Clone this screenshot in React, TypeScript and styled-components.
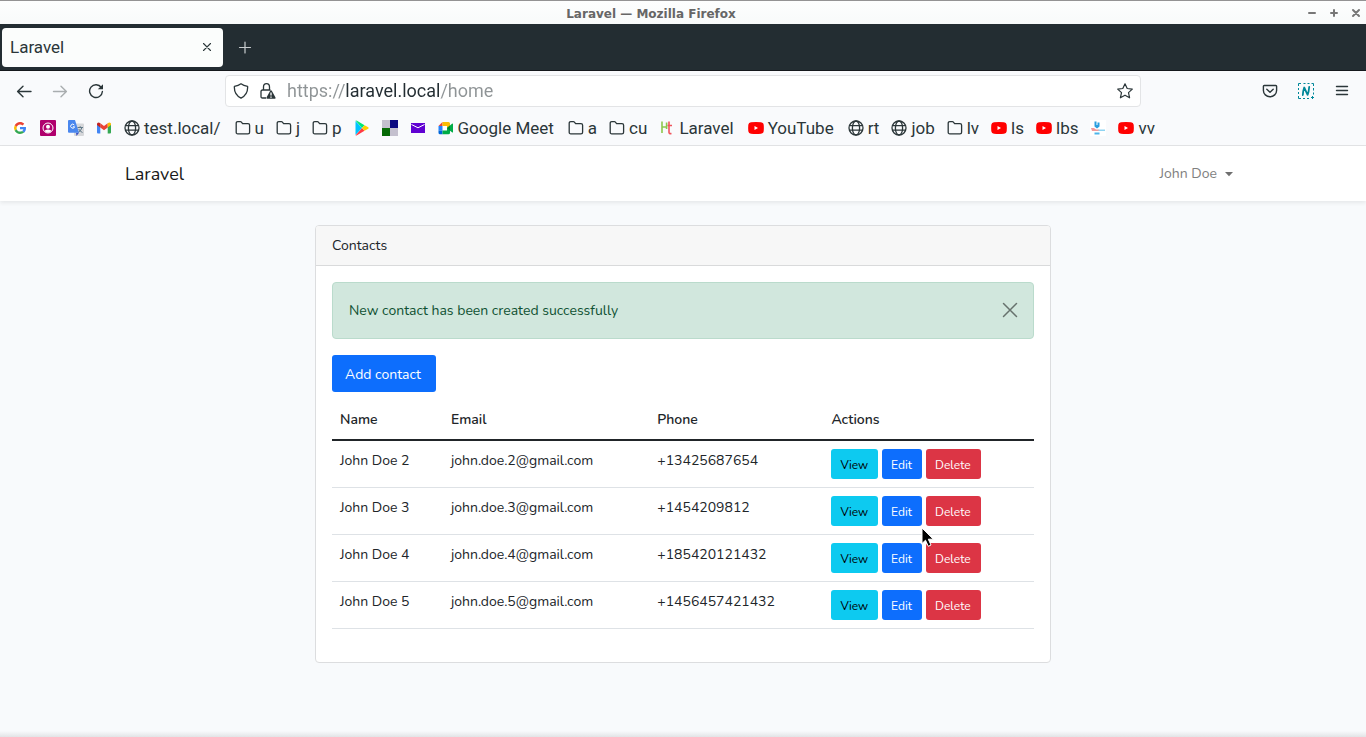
import React from "react";
import styled, { createGlobalStyle } from "styled-components";

const ui = `Roboto, "Liberation Sans", sans-serif`;
const web = `Nunito, "Open Sans", sans-serif`;

const GlobalStyle = createGlobalStyle`
  *, *::before, *::after { box-sizing: border-box; }
  body { margin: 0; background: #f8fafc; color: #212529; font-family: ${web}; font-size: 14px; line-height: 24px; }
  button, input { font-family: inherit; margin: 0; }
  svg { display: block; flex: none; }
`;

/* ---------- window ---------- */

const Window = styled.div`
  min-height: 100vh;
  display: flex;
  flex-direction: column;
`;

const TitleBar = styled.header`
  height: 24px;
  display: flex;
  align-items: center;
  padding-right: 4px;
  border-top: 1px solid #949394;
  background: linear-gradient(#fdfefe, #f8fafa);
`;

const WindowTitle = styled.div`
  flex: 1;
  padding: 2px 4px 0 0;
  text-align: center;
  color: #666;
  font: bold 12px/20px "DejaVu Sans", sans-serif;
`;

const WindowButtons = styled.div`
  display: flex;
  gap: 10px;
`;

const PlainButton = styled.button`
  display: flex;
  align-items: center;
  justify-content: center;
  padding: 0;
  border: 0;
  background: none;
  color: #2b3639;
`;

const TabStrip = styled.div`
  height: 47px;
  display: flex;
  align-items: center;
  gap: 14px;
  padding: 0 2px;
  background: #232d32;
  border-bottom: 1px solid #15181c;
`;

const Tab = styled.div`
  width: 221px;
  height: 39px;
  display: flex;
  align-items: center;
  justify-content: space-between;
  padding: 0 8px;
  border-radius: 4px;
  background: #fbfdfc;
  color: #2b3639;
  font: 17px/24px ${ui};
`;

const NavToolbar = styled.div`
  height: 40px;
  display: flex;
  align-items: center;
  justify-content: space-between;
  gap: 12px;
  padding: 0 16px;
  background: #f9fafc;
`;

const NavGroup = styled.div<{ $end?: boolean }>`
  display: flex;
  flex: 0 0 197px;
  gap: 20px;
  justify-content: ${(p) => (p.$end ? "flex-end" : "flex-start")};
`;

const AddressBar = styled.label`
  flex: 1;
  height: 32px;
  display: flex;
  align-items: center;
  gap: 11px;
  padding: 0 7px;
  border: 1px solid #e3e4e6;
  border-radius: 4px;
  background: #fff;
  color: #2b3639;
`;

const AddressInput = styled.input`
  flex: 1;
  min-width: 0;
  height: 28px;
  padding: 0 0 2px;
  border: 0;
  outline: 0;
  font: 18px/26px ${ui};
  background: linear-gradient(90deg, #8f9496 59px, #232d32 59px, #232d32 154px, #8f9496 154px);
  background-clip: text;
  -webkit-text-fill-color: transparent;
`;

const Bookmarks = styled.nav`
  height: 35px;
  display: flex;
  align-items: center;
  gap: 12px;
  padding: 0 12px;
  overflow: hidden;
  background: #f9fafc;
  border-bottom: 1px solid #e3e4e6;
`;

const Bookmark = styled.a<{ $long: boolean }>`
  display: flex;
  align-items: center;
  gap: 4px;
  padding-right: ${(p) => (p.$long ? 2 : 0)}px;
  color: #2b3639;
  font: 17px/24px ${ui};
  white-space: nowrap;
  text-decoration: none;
`;

/* ---------- page ---------- */

const Page = styled.div`
  position: relative;
  flex: 1;
  background: #f8fafc;
`;

const PageEdge = styled.div`
  position: absolute;
  left: 0;
  right: 0;
  bottom: 0;
  height: 6px;
  background: linear-gradient(#f8fafc, #e2e4e6);
`;

const Navbar = styled.nav`
  background: #fff;
  box-shadow: 0 2px 4px rgba(0, 0, 0, 0.075);
`;

const NavContainer = styled.div`
  max-width: 1140px;
  height: 55px;
  margin: 0 auto;
  padding: 0 20px 0 12px;
  display: flex;
  align-items: center;
  justify-content: space-between;
`;

const Brand = styled.a`
  color: #191919;
  font-size: 18px;
  line-height: 28px;
  text-decoration: none;
`;

const UserMenu = styled.button`
  display: flex;
  align-items: center;
  gap: 8px;
  padding: 1px 0 0;
  border: 0;
  background: none;
  color: #7f7f7f;
  font-size: 14px;
  line-height: 24px;
`;

const Main = styled.main`
  max-width: 760px;
  margin: 0 auto;
  padding: 24px 12px;
`;

const Card = styled.section`
  position: relative;
  border: 1px solid #dcdddf;
  border-radius: 4px;
  background: #fff;
`;

const CardHeader = styled.h1`
  margin: 0;
  padding: 8px 16px 7px;
  border-bottom: 1px solid #d9dadb;
  border-radius: 3px 3px 0 0;
  background: #f7f7f7;
  font-size: 14px;
  line-height: 24px;
  font-weight: 400;
`;

const CardBody = styled.div`
  padding: 16px 16px 33px;
`;

const Alert = styled.div`
  display: flex;
  align-items: flex-start;
  justify-content: space-between;
  padding: 16px 15px 15px 16px;
  margin-bottom: 16px;
  border: 1px solid #badbcc;
  border-radius: 4px;
  background: #d1e7dd;
  color: #0f5132;
`;

const AlertClose = styled(PlainButton)`
  height: 22px;
  color: #000;
  opacity: 0.5;
`;

const Button = styled.button<{ $bg: string; $dark?: boolean; $small?: boolean }>`
  height: ${(p) => (p.$small ? 30 : 37)}px;
  padding: ${(p) => (p.$small ? "2px 10px 0 9px" : "2px 15px 0 13px")};
  border: 0;
  border-radius: 3px;
  background: ${(p) => p.$bg};
  color: ${(p) => (p.$dark ? "#000" : "#fff")};
  font-size: ${(p) => (p.$small ? 12 : 14)}px;
  line-height: 20px;
`;

const Table = styled.table`
  width: 100%;
  margin-top: 8px;
  border-spacing: 0;
  table-layout: fixed;
  text-align: left;
`;

const Th = styled.th<{ $width: number }>`
  width: ${(p) => p.$width}%;
  padding: 8px 8px 7px;
  border-bottom: 2px solid #212529;
  font-weight: 600;
`;

const Td = styled.td`
  height: 47px;
  padding: 8px 8px 7px;
  border-bottom: 1px solid #dee2e6;
  vertical-align: top;
`;

const Actions = styled.div`
  display: flex;
  gap: 4px;
`;

const Pointer = styled.svg`
  position: absolute;
  left: 605px;
  top: 301px;
  pointer-events: none;
`;

/* ---------- icons ---------- */

const Line = ({ d, size = 16, box = 16, w = 1.3, color = "currentColor" }: { d: string; size?: number; box?: number; w?: number; color?: string }) => (
  <svg width={size} height={size} viewBox={`0 0 ${box} ${box}`} fill="none" stroke={color} strokeWidth={w} strokeLinecap="round" strokeLinejoin="round">
    <path d={d} />
  </svg>
);

const Folder = () => <Line w={1.3} d="M1.200 12.200V3.200Q1.200 1.600 2.800 1.600H5.400Q6 1.600 6.400 2.100L7.600 3.600H13Q14.600 3.600 14.600 5.200V12.200Q14.600 13.800 13 13.800H2.800Q1.200 13.800 1.200 12.200Z" />;

const Globe = () => (
  <svg width="16" height="16" viewBox="0 0 16 16" fill="none" stroke="currentColor" strokeWidth="1.300">
    <circle cx="8" cy="8" r="7" />
    <ellipse cx="8" cy="8" rx="3.600" ry="7" />
    <path d="M1.400 5.600H14.600M1.400 10.200H14.600" />
  </svg>
);

const YouTube = () => (
  <svg width="16" height="16" viewBox="0 0 16 16">
    <path fill="#f00" d="M3 2.300Q8 1.800 13 2.300Q15.400 2.500 15.700 4.800Q16 8 15.700 11.200Q15.400 13.500 13 13.700Q8 14.200 3 13.700Q.6 13.500.3 11.200Q0 8 .3 4.800Q.6 2.500 3 2.300Z" />
    <path fill="#fff" d="M6.500 6L10 8L6.500 10Z" />
  </svg>
);

const Google = () => (
  <svg width="16" height="16" viewBox="0 0 48 48">
    <circle cx="24" cy="24" r="24" fill="#fff" />
    <path fill="#ea4335" d="M24 13.500c2.900 0 5.500 1 7.500 2.900l5.300-5.300C33.500 8 29.200 6.200 24 6.200c-6.900 0-12.900 4-15.900 9.800l6.200 4.800C15.700 16.600 19.500 13.500 24 13.500z" />
    <path fill="#4285f4" d="M42 24.400c0-1.300-.1-2.400-.3-3.500H24v6.900h10.100c-.4 2.300-1.700 4.200-3.700 5.500l6 4.700C39.900 34.700 42 30 42 24.400z" />
    <path fill="#fbbc05" d="M14.300 27.500a11 11 0 0 1 0-6.800L8.100 16a18 18 0 0 0 0 16.200z" />
    <path fill="#34a853" d="M24 42c4.900 0 9-1.600 12.200-4.400l-6-4.600c-1.700 1.100-3.800 1.800-6.300 1.800-4.600 0-8.400-3-9.700-7.200l-6.200 4.700C11.100 38 17 42 24 42z" />
  </svg>
);

const Account = () => (
  <svg width="16" height="16" viewBox="0 0 16 16">
    <rect width="16" height="16" rx="1" fill="#b0006d" />
    <circle cx="8" cy="8" r="5" fill="none" stroke="#fff" strokeWidth="1" />
    <circle cx="8" cy="6.700" r="2" fill="#fff" />
    <path fill="#fff" d="M4.500 11Q5 9.400 8 9.400T11.500 11Q10 12.800 8 12.800T4.500 11Z" />
  </svg>
);

const Translate = () => (
  <svg width="16" height="16" viewBox="0 0 16 16">
    <rect x="6" y="3.500" width="10" height="12.500" rx="1" fill="#d6d7da" />
    <path d="M9.500 7.500H15M12.200 6.200V7.500M14 7.500Q13 11 10 12.500M10.700 9Q12 11.500 14.500 12.500" stroke="#607988" fill="none" />
    <path fill="#3a4fc4" d="M8 12.800H11L8.500 16Z" />
    <path fill="#4a87ee" d="M1 0H7L11 12.800H1Q0 12.800 0 11.800V1Q0 0 1 0Z" />
    <path d="M6.300 5A2 2 0 1 0 6.600 6.800H4.900" stroke="#fff" fill="none" />
  </svg>
);

const Gmail = () => (
  <svg width="16" height="16" viewBox="0 0 16 16">
    <path fill="#4285f4" d="M1 3.500L4.300 6V13.500H2Q1 13.500 1 12.500Z" />
    <path fill="#34a853" d="M15 3.500L11.700 6V13.500H14Q15 13.500 15 12.500Z" />
    <path fill="#ea4335" d="M4.300 3.200L8 6L11.700 3.200V7.500L8 10.300L4.300 7.500Z" />
    <path fill="#c5221f" d="M1 4Q1 2.500 2.500 2.500Q3.300 2.500 4.300 3.300V7.500L1 5Z" />
    <path fill="#fbbc04" d="M15 4Q15 2.500 13.500 2.500Q12.700 2.500 11.700 3.300V7.500L15 5Z" />
  </svg>
);

const Play = () => (
  <svg width="16" height="16" viewBox="0 0 16 16">
    <path fill="#00c3ff" d="M1.500 1V15L8 8Z" />
    <path fill="#00e676" d="M1.500.6Q2 .2 3 .8L10.500 5.200L8 8Z" />
    <path fill="#ff3a44" d="M1.500 15.400Q2 15.800 3 15.200L10.500 10.800L8 8Z" />
    <path fill="#ffd000" d="M10.500 5.200L14.300 7.300Q15 8 14.300 8.700L10.500 10.800L8 8Z" />
  </svg>
);

const Squares = () => (
  <svg width="16" height="16" viewBox="0 0 16 16">
    <path fill="#c4c0ce" d="M0 0H8V8H16V16H8V8H0Z" />
    <path fill="#0c0a80" d="M8 0H16V8H8Z" />
    <path fill="#066a06" d="M0 8H8V16H0Z" />
  </svg>
);

const Mail = () => (
  <svg width="16" height="16" viewBox="0 0 16 16">
    <path fill="#6001d2" d="M1 3H15V13H1Z" />
    <path d="M1.500 4.500L8 7.800L14.500 4.500" stroke="#fff" fill="none" />
  </svg>
);

const Meet = () => (
  <svg width="16" height="16" viewBox="0 0 16 16">
    <path fill="#fff" d="M4 5H10V11H4Z" />
    <path fill="#ea4335" d="M.5 6L4.500 2V6Z" />
    <path fill="#fbbc04" d="M4.500 2H10.500Q12 2 12 3.500V6L9 8.500V6H4.500Z" />
    <path fill="#2684fc" d="M.5 6H4.500V10.500H.5Z" />
    <path fill="#0066da" d="M.5 10.500H4.500V14.200H2Q.5 14.200.5 12.700Z" />
    <path fill="#00ac47" d="M4.500 10.500H9V8L14 3.700Q15 3.200 15 4.200V12Q15 13 14 12.300L12 10.800V12.700Q12 14.200 10.500 14.200H4.500Z" />
    <path fill="#00832d" d="M9 8L12 5.500V10.800Z" />
  </svg>
);

const HIcon = () => (
  <svg width="16" height="16" viewBox="0 0 16 16" fill="none" strokeWidth="1.600">
    <path stroke="#8cc84b" d="M3 1.500V13M3 7H8M7.600 2.500V9" />
    <path stroke="#f0545c" d="M10 1.500V12.500Q10 14 12.500 13.500M8.500 5.500H13" />
  </svg>
);

const Stamp = () => (
  <svg width="16" height="16" viewBox="0 0 16 16">
    <rect width="16" height="16" fill="#fff" />
    <path fill="#2b9fe0" d="M4.500 1.500H6.500V5H7.500V2.500H9.500V6.500L7 8.500L4.500 6.500Z" />
    <path fill="#f29a9a" d="M1 8H4L6 9.500H9V11H2Z" />
    <path fill="#8ed4f2" d="M8.500 9.500H15V11H8.500Z" />
    <path fill="#4bb5ea" d="M4.500 12.500H9.500V14.500H4.500Z" />
  </svg>
);

const LockWarning = () => (
  <svg width="16" height="16" viewBox="0 0 16 16" fill="none" stroke="currentColor" strokeWidth="1.300">
    <path d="M3.500 7V4Q3.500.7 6.500.7T9.500 4V7M6 15H2.500Q1 15 1 13.500V8.500Q1 7 2.500 7H10.500" />
    <path fill="currentColor" stroke="none" d="M11 7.200Q11.500 7.200 11.800 7.800L15.500 14.500Q15.900 15.700 14.800 15.700H7.200Q6.100 15.700 6.500 14.500L10.200 7.800Q10.500 7.200 11 7.200Z" />
    <path stroke="#fff" d="M11 9.500V12.500M11 13.500V14.700" />
  </svg>
);

const Reload = () => (
  <svg width="16" height="16" viewBox="0 0 16 16" fill="none" stroke="currentColor" strokeWidth="1.400" strokeLinecap="round">
    <path d="M13.300 4.500A6.400 6.400 0 1 0 14.400 8.500" />
    <path fill="currentColor" stroke="none" d="M15 1.300V6.200H9.800Z" />
  </svg>
);

const Clipper = () => (
  <svg width="16" height="16" viewBox="0 0 16 16" fill="none" stroke="#008799">
    <path d="M.5 3V.5H3M5.500.5H7.500M9.500.5H11.500M13.500.5H15.500V3M15.500 5V7.500M15.500 9.500V11.500M.5 5V7M.5 9V11M.5 13V15.500H3M5 15.500H7M9 15.500H11M13 14.500H16M14.500 13V16" />
    <path strokeWidth="1.800" strokeLinejoin="round" strokeLinecap="round" d="M4.800 12Q5.200 7 6.200 4.500L9.600 11.800Q10.800 9 11.200 4" />
  </svg>
);

const Pocket = () => <Line w={1.4} d="M2.200 2.500H13.800Q14.600 2.500 14.600 3.300V7.500A6.600 6.200 0 0 1 1.400 7.500V3.300Q1.400 2.500 2.200 2.500ZM4.800 6.300L8 9.300L11.200 6.300" />;

const Caret = () => (
  <svg width="8" height="5" viewBox="0 0 8 5">
    <path fill="#6f6f6f" d="M0 0H8L4 4.300Z" />
  </svg>
);

/* ---------- data ---------- */

const bookmarks: [() => React.ReactElement, string, string][] = [
  [Google, "", "Google"],
  [Account, "", "Account"],
  [Translate, "", "Translate"],
  [Gmail, "", "Gmail"],
  [Globe, "test.local/", ""],
  [Folder, "u", ""],
  [Folder, "j", ""],
  [Folder, "p", ""],
  [Play, "", "Play"],
  [Squares, "", "Squares"],
  [Mail, "", "Mail"],
  [Meet, "Google Meet", ""],
  [Folder, "a", ""],
  [Folder, "cu", ""],
  [HIcon, "Laravel", ""],
  [YouTube, "YouTube", ""],
  [Globe, "rt", ""],
  [Globe, "job", ""],
  [Folder, "lv", ""],
  [YouTube, "ls", ""],
  [YouTube, "lbs", ""],
  [Stamp, "", "Help"],
  [YouTube, "vv", ""],
];

const contacts = [
  { name: "John Doe 2", email: "john.doe.2@gmail.com", phone: "+13425687654" },
  { name: "John Doe 3", email: "john.doe.3@gmail.com", phone: "+1454209812" },
  { name: "John Doe 4", email: "john.doe.4@gmail.com", phone: "+185420121432" },
  { name: "John Doe 5", email: "john.doe.5@gmail.com", phone: "+1456457421432" },
];

export default function App() {
  return (
    <Window>
      <GlobalStyle />
      <TitleBar>
        <WindowTitle>Laravel — Mozilla Firefox</WindowTitle>
        <WindowButtons>
          <PlainButton aria-label="Minimize"><Line size={12} box={12} w={2} color="#777" d="M3 6H9" /></PlainButton>
          <PlainButton aria-label="Maximize"><Line size={12} box={12} w={2} color="#777" d="M3 6H9M6 3V9" /></PlainButton>
          <PlainButton aria-label="Close window"><Line size={12} box={12} w={2} color="#777" d="M3 3L9 9M9 3L3 9" /></PlainButton>
        </WindowButtons>
      </TitleBar>
      <TabStrip>
        <Tab>
          <span>Laravel</span>
          <PlainButton aria-label="Close tab"><Line w={1.1} d="M4.500 4.500L11.500 11.500M11.500 4.500L4.500 11.500" /></PlainButton>
        </Tab>
        <PlainButton aria-label="New tab"><Line w={1.2} color="#c9cdcf" d="M2.500 8.500H13.500M8 3V14" /></PlainButton>
      </TabStrip>
      <NavToolbar>
        <NavGroup>
          <PlainButton aria-label="Back"><Line d="M15 8.500H1.800M7 3.300L1.600 8.500L7 13.700" w={1.4} /></PlainButton>
          <PlainButton aria-label="Forward"><Line color="#a9adaf" d="M1.500 8.500H14M9 3.300L14.400 8.500L9 13.700" w={1.4} /></PlainButton>
          <PlainButton aria-label="Reload"><Reload /></PlainButton>
        </NavGroup>
        <AddressBar>
          <Line w={1.3} d="M8 .8Q10.500 2.700 14.600 3.300Q15.200 11.500 8 15.200Q.8 11.500 1.400 3.300Q5.500 2.700 8 .8Z" />
          <LockWarning />
          <AddressInput aria-label="Address" defaultValue="https://laravel.local/home" spellCheck={false} />
          <Line w={1.2} d="M8 .8L10.200 5.500L15.300 6.100L11.500 9.600L12.600 14.800L8 12.200L3.400 14.800L4.500 9.600L.7 6.100L5.800 5.500Z" />
        </AddressBar>
        <NavGroup $end>
          <PlainButton aria-label="Save to Pocket"><Pocket /></PlainButton>
          <PlainButton aria-label="Clipper"><Clipper /></PlainButton>
          <PlainButton aria-label="Menu"><Line w={1.4} d="M2.500 3.500H13.500M2.500 7.500H13.500M2.500 11.500H13.500" /></PlainButton>
        </NavGroup>
      </NavToolbar>
      <Bookmarks aria-label="Bookmarks">
        {bookmarks.map(([Icon, text, label], i) => (
          <Bookmark key={i} href="#" aria-label={label || undefined} $long={text.length > 4}>
            <Icon />
            {text && <span>{text}</span>}
          </Bookmark>
        ))}
      </Bookmarks>

      <Page>
        <Navbar>
          <NavContainer>
            <Brand href="#">Laravel</Brand>
            <UserMenu>John Doe <Caret /></UserMenu>
          </NavContainer>
        </Navbar>
        <Main>
          <Card>
            <CardHeader>Contacts</CardHeader>
            <CardBody>
              <Alert role="alert">
                <span>New contact has been created successfully</span>
                <AlertClose aria-label="Dismiss"><Line w={1.5} d="M1.500 1.500L14.500 14.500M14.500 1.500L1.500 14.500" /></AlertClose>
              </Alert>
              <Button $bg="#0d6efd">Add contact</Button>
              <Table>
                <thead>
                  <tr>
                    <Th $width={15.8}>Name</Th>
                    <Th $width={29.4}>Email</Th>
                    <Th $width={24.8}>Phone</Th>
                    <Th $width={30}>Actions</Th>
                  </tr>
                </thead>
                <tbody>
                  {contacts.map((c) => (
                    <tr key={c.name}>
                      <Td>{c.name}</Td>
                      <Td>{c.email}</Td>
                      <Td>{c.phone}</Td>
                      <Td>
                        <Actions>
                          <Button $small $dark $bg="#0dcaf0">View</Button>
                          <Button $small $bg="#0d6efd">Edit</Button>
                          <Button $small $bg="#dc3545">Delete</Button>
                        </Actions>
                      </Td>
                    </tr>
                  ))}
                </tbody>
              </Table>
            </CardBody>
            <Pointer width="14" height="21" viewBox="0 0 14 21">
              <path fill="#000" stroke="#fff" d="M1 1V16.500L4.500 13.200L7.300 19.300L10 18L7.300 12.200H12.300Z" />
            </Pointer>
          </Card>
        </Main>
        <PageEdge />
      </Page>
    </Window>
  );
}
